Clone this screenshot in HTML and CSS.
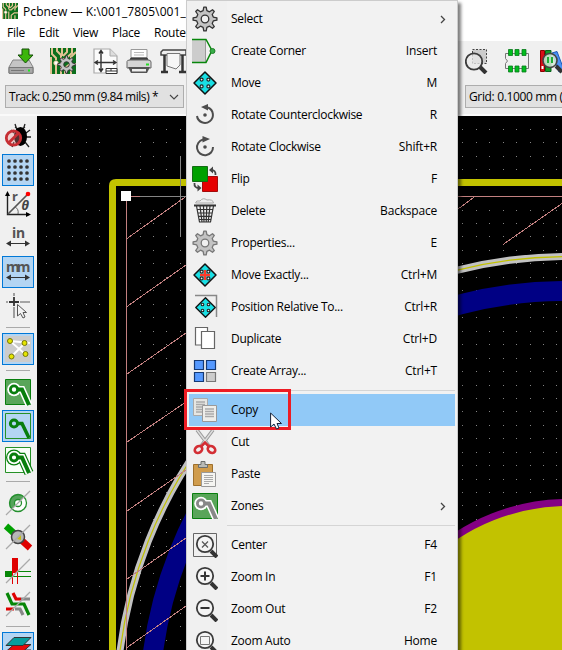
FILE: index.html
```html
<!DOCTYPE html>
<html lang="en">
<head>
<meta charset="utf-8">
<title>Pcbnew</title>
<link rel="stylesheet" href="styles.css">
</head>
<body>
<svg class="defs" width="0" height="0">
  <defs>
    <symbol id="gear" viewBox="0 0 26 26">
      <path fill="#c3c3c3" stroke-width="1.3" stroke-linejoin="round" fill-rule="evenodd" d="M21.3 11.1 24.9 11.8 24.9 14.2 21.3 14.9 20.2 17.5 22.3 20.5 20.5 22.3 17.5 20.2 14.9 21.3 14.2 24.9 11.8 24.9 11.1 21.3 8.5 20.2 5.5 22.3 3.7 20.5 5.8 17.5 4.7 14.9 1.1 14.2 1.1 11.8 4.7 11.1 5.8 8.5 3.7 5.5 5.5 3.7 8.5 5.8 11.1 4.7 11.8 1.1 14.2 1.1 14.9 4.7 17.5 5.8 20.5 3.7 22.3 5.5 20.2 8.5ZM16.8 13a3.8 3.8 0 1 0-7.6 0a3.8 3.8 0 1 0 7.6 0Z"/>
    </symbol>
    <symbol id="move" viewBox="0 0 26 26">
      <path fill="#1adfe4" stroke="#111" stroke-width="1.5" stroke-linejoin="round" d="M13 2 24 13 13 24 2 13Z"/>
      <g fill="#e8f4f4" stroke="#222" stroke-width="1.2"><circle cx="9.6" cy="9.6" r="1.5"/><circle cx="16.4" cy="9.6" r="1.5"/><circle cx="9.6" cy="16.4" r="1.5"/><circle cx="16.4" cy="16.4" r="1.5"/></g>
    </symbol>
    <symbol id="pcb" viewBox="0 0 26 26">
      <path fill="#0b6f1c" d="M0 0H26V26H0Z"/>
      <g fill="none" stroke="#e2c294" stroke-width="2"><path d="M2 0V6L6 10V12M7 0V3L11 7V10M12 0V8M17 0V4L13 8M22 0V5L15 11H11M26 4 21 9V12M1 9V26M6 17V26M11 14V26M26 16H20L15 20V26M21 20V26"/></g>
      <circle cx="6" cy="15" r="2.2" fill="#fff" stroke="#e2c294"/>
    </symbol>
    <symbol id="lens" viewBox="0 0 26 26">
      <path stroke="#333" stroke-width="4" d="m19 19 6 6"/>
      <circle cx="13" cy="12" r="8.2" fill="#f4f4f4" stroke="#3b3b3b" stroke-width="1.8"/>
    </symbol>
  </defs>
</svg>

<div class="window">
  <header class="titlebar">
    <svg class="app-icon" width="16" height="16" viewBox="0 0 26 26"><use href="#pcb"/></svg>
    <span class="title">Pcbnew — K:\001_7805\001_</span>
  </header>
  <nav class="menubar"><span>File</span><span>Edit</span><span>View</span><span>Place</span><span>Route</span></nav>

  <div class="toolbar">
    <svg class="t-save" width="26" height="26" viewBox="0 0 26 26"><path fill="#c5c5c5" stroke="#858585" d="M5 12H21L25 19V25H1V19Z"/><path fill="#a9a9a9" stroke="#777" d="M1 19.5H25V25.3H1Z"/><path stroke="#777" d="M3 22.5H16"/><path stroke="#1de81d" stroke-width="2" d="M20 22.5H22"/><path fill="#3cb60b" stroke="#154d08" d="M14 1H21V7H25L17.5 15 10 7H14Z"/></svg>
    <i class="vsep"></i>
    <svg class="t-setup" width="26" height="26" viewBox="0 0 26 26"><use href="#pcb"/><use href="#gear" x="7" y="7" width="19" height="19" stroke="#333"/></svg>
    <i class="vsep"></i>
    <svg class="t-page" width="26" height="26" viewBox="0 0 26 26"><path fill="#fbfbfb" stroke="#aaa" stroke-width="1.2" d="M1 1H17L24 8V25H1Z"/><path fill="#ddd" stroke="#aaa" d="M17 1V8H24"/><path fill="none" stroke="#333" stroke-width="1.4" d="M8 3V23M3 14.500H22M6 5.500 8 2.500 10 5.500M6 20.500 8 23.500 10 20.500M5 12.500 2 14.500 5 16.500M20 12.500 23 14.500 20 16.500"/><path fill="#fff" stroke="#333" d="M13 20.500H24V25.500H13ZM13 23H24M18 20.500V23"/></svg>
    <svg class="t-print" width="26" height="26" viewBox="0 0 26 26"><path fill="#fff" stroke="#999" d="M5 1.500H21V10H5Z"/><path stroke="#bbb" d="M8 4.500H18M8 7H18"/><path fill="#4a4a4a" stroke="#333" d="M5 10 3 14H23L21 10Z"/><path fill="#d6d6d6" stroke="#666" d="M1 13.500Q1 12 4 12H22Q25 12 25 14V20H1Z"/><path fill="#555" d="M2 19H24L21 25H5Z"/><path fill="#eee" d="M6 21H20V23.500H6Z"/><path stroke="#29dc29" stroke-width="2" d="M20 16.500H23"/></svg>
    <svg class="t-plot" width="26" height="26" viewBox="0 0 26 26"><path fill="#eee" stroke="#444" stroke-width="1.5" d="M3 2H26V7H1V4Z"/><path stroke="#333" stroke-width="2.500" d="M4.500 7V24M1 24H8M22.500 7V24M19 24H26"/><path fill="#f6f6f6" stroke="#777" d="M7 5.500H20V17L16 21 7 18Z"/></svg>
    <svg class="t-zoomsel" width="26" height="26" viewBox="0 0 26 26"><path fill="#ccc" stroke="#444" stroke-dasharray="2 1.500" d="M7.500 1.500H21.500V15.500H7.500Z"/><path stroke="#333" stroke-width="4" d="m15 19 6 6"/><circle cx="9" cy="13.500" r="8.200" fill="#e9e9e9" fill-opacity=".75" stroke="#3b3b3b" stroke-width="1.800"/></svg>
    <i class="vsep"></i>
    <svg class="t-foot" width="26" height="26" viewBox="0 0 26 26"><path fill="#f0f0f0" stroke="#777" d="M1.500 5.500H24.500V20.500H1.500V15.500L3.500 13 1.500 10.500Z"/><path fill="#00bd1d" stroke="#08791a" stroke-width=".8" d="M4.500 1.500H8.500V7.500H4.500ZM11 1.500H15V7.500H11ZM18 1.500H22V7.500H18ZM4.500 18H8.500V24H4.500ZM11 18H15V24H11ZM18 18H22V24H18Z"/></svg>
    <svg class="t-lib" width="26" height="26" viewBox="0 0 26 26"><path fill="#d80d18" stroke="#8b0000" d="M1.500 2.500H5.500V23.500H1.500Z"/><path fill="#129a27" stroke="#07611a" d="M6.500 2.500H12V23.500H6.500Z"/><path fill="#4b92f5" stroke="#1d58b6" d="M13 5 18 3.500 25 22 20 24Z"/><path fill="#fff" d="M2.500 18H4.500V21H2.500Z"/><path stroke="#333" stroke-width="4" d="m17 18 6 6"/><circle cx="11" cy="12.500" r="7" fill="#d6ead8" fill-opacity=".85" stroke="#444" stroke-width="1.600"/><path stroke="#20ad36" stroke-width="2" d="M9 9V15M13 9V15"/></svg>
  </div>

  <div class="selectbar">
    <div class="select track"><span>Track: 0.250 mm (9.84 mils) *</span><svg width="12" height="8" viewBox="0 0 12 8"><path fill="none" stroke="#444" stroke-width="1.100" d="M2 2 6 6 10 2"/></svg></div>
    <div class="select grid-size"><span>Grid: 0.1000 mm (</span></div>
  </div>

  <main class="workspace">
    <aside class="sidebar">
      <div class="tool"><svg width="26" height="26" viewBox="0 0 26 26"><path fill="none" stroke="#222" stroke-width="1.300" d="M12 7 10 1M18 7 20 1M10 4 13 6M20 4 17 6M21 10 25 7M21 14H26M20 19 24 24M9 19 7 24M9 10 6 7"/><ellipse cx="15.500" cy="13.500" rx="6.500" ry="9.500"/><circle cx="8.500" cy="15" r="7.200" fill="#f28d8d" fill-opacity=".35" stroke="#c62f34" stroke-width="2.800"/><path stroke="#c62f34" stroke-width="2.800" d="m3.500 20 10-10"/></svg></div>
      <div class="tool on"><svg width="26" height="26" viewBox="0 0 26 26"><path stroke="#333" stroke-width="3.700" stroke-linecap="round" stroke-dasharray="0 6" d="M4 4H22.100M4 10H22.100M4 16H22.100M4 22H22.100"/></svg></div>
      <div class="tool"><svg width="26" height="26" viewBox="0 0 26 26"><path fill="none" stroke="#222" stroke-width="1.400" d="M2.500 3V23.500H24"/><path d="M0 5 2.500 0 5 5ZM21 21 26 23.500 21 26Z"/><path stroke="#555" stroke-width="1.700" d="M3 23 22 4"/><path fill="none" stroke="#666" d="M10 16Q14 18 13 23"/><circle cx="23" cy="3" r="2.300" fill="red"/><text class="polar-r" x="7" y="10">r</text><text class="polar-t" x="16.500" y="19">θ</text></svg></div>
      <div class="tool"><svg width="26" height="26" viewBox="0 0 26 26"><text class="unit" x="7" y="13">in</text><path stroke="#333" d="M3 18.500H23"/><path fill="#333" d="M6 15.500 1 18.500 6 21.500ZM20 15.500 25 18.500 20 21.500Z"/></svg></div>
      <div class="tool on"><svg width="26" height="26" viewBox="0 0 26 26"><text class="unit" x="1" y="13" textLength="24">mm</text><path stroke="#333" d="M3 18.500H23"/><path fill="#333" d="M6 15.500 1 18.500 6 21.500ZM20 15.500 25 18.500 20 21.500Z"/></svg></div>
      <div class="tool"><svg width="26" height="26" viewBox="0 0 26 26"><path stroke="#8b8b8b" stroke-width="1.600" d="M9 0V3M9 14V25M1 9H3M15 9H25"/><path stroke="#333" stroke-width="1.800" d="M9 4V13M4 9H14"/><path fill="#f3f3f3" stroke="#555" d="M12.500 11.500V23L15.500 20.500 18 25 20 24 18 19.500H21.500Z"/></svg></div>
      <i class="hsep"></i>
      <div class="tool on"><svg width="26" height="26" viewBox="0 0 26 26"><path fill="#ccc" d="M0 0H26V26H0Z"/><path stroke="#fff" stroke-width="1.800" d="M5 5 25 7M5 5 20 18M7 20 20 7"/><g fill="#e5e500" stroke="#77770a"><circle cx="5" cy="5" r="2.500"/><circle cx="19.500" cy="7" r="2.500"/><circle cx="6.500" cy="20.500" r="2.500"/><circle cx="20.500" cy="18" r="2.500"/></g></svg></div>
      <i class="hsep"></i>
      <div class="tool"><svg width="26" height="26" viewBox="0 0 26 26"><path fill="#59a559" stroke="#087e0d" d="M.5.500H25.500V25.500H.5Z"/><path fill="none" stroke="#fff" stroke-width="7" d="M9 10.500H17L24 26"/><circle cx="9" cy="10.500" r="6.800" fill="#fff"/><path fill="none" stroke="#087e0d" stroke-width="4" d="M9 10.500H17L24 26"/><circle cx="9" cy="10.500" r="3.600" fill="#fff" stroke="#087e0d" stroke-width="2.800"/></svg></div>
      <div class="tool on"><svg width="26" height="26" viewBox="0 0 26 26"><path fill="none" stroke="#269126" d="M.5.500H25.500V25.500H.5Z"/><path fill="none" stroke="#087e0d" stroke-width="3.500" d="M9 10.500H17L24 25"/><circle cx="9" cy="10.500" r="3.600" fill="#b3d7f5" stroke="#087e0d" stroke-width="3"/></svg></div>
      <div class="tool"><svg width="26" height="26" viewBox="0 0 26 26"><path fill="#f8fff8" stroke="#269126" d="M.5.500H25.500V25.500H.5Z"/><path fill="none" stroke="#087e0d" stroke-width="9.500" d="M9 10.500H17L24 26"/><circle cx="9" cy="10.500" r="8" fill="#087e0d"/><path fill="none" stroke="#fff" stroke-width="7.200" d="M9 10.500H17L24 26"/><circle cx="9" cy="10.500" r="6.800" fill="#fff"/><path fill="none" stroke="#087e0d" stroke-width="4" d="M9 10.500H17L24 26"/><circle cx="9" cy="10.500" r="3.500" fill="#fff" stroke="#087e0d" stroke-width="2.800"/></svg></div>
      <i class="hsep"></i>
      <div class="tool"><svg width="26" height="26" viewBox="0 0 26 26"><circle cx="13" cy="13" r="8.500" fill="#fff" stroke="#238f2d" stroke-width="1.300"/><path fill="#55a35b" stroke="#238f2d" d="M7 19A8.500 8.500 0 0 1 19 7Z"/><circle cx="13" cy="13" r="3.500" fill="#fff" stroke="#238f2d" stroke-width="1.300"/><path stroke="#aaa" stroke-width="1.200" d="M1 25 25 1"/></svg></div>
      <div class="tool"><svg width="26" height="26" viewBox="0 0 26 26"><path stroke="#00a000" stroke-width="6.500" d="M1 2 12 12"/><path stroke="#df0000" stroke-width="6.500" d="M13 13 25 24"/><circle cx="13" cy="13" r="6.500" fill="#b7b7b7" stroke="#444" stroke-width="1.500"/><path fill="#c6bd16" d="M12 15 16 11V16Z"/><path stroke="#aaa" stroke-width="1.200" d="M1 25 25 1"/></svg></div>
      <div class="tool"><svg width="26" height="26" viewBox="0 0 26 26"><path fill="#078607" d="M0 13H7V19H0Z"/><path stroke="#078607" d="M7 13.500H26M7 18.500H26"/><path fill="#df0000" d="M7 0H13V15H7Z"/><path stroke="#df0000" d="M7.500 15V26M12.500 15V26"/><path stroke="#aaa" stroke-width="1.200" d="M1 25 25 1"/></svg></div>
      <div class="tool"><svg width="26" height="26" viewBox="0 0 26 26"><g fill="none" stroke-width="3.200"><path stroke="#df0000" d="M8 1 11 7H16M1 17H9"/><path stroke="#888" d="M16 7H25M10 17H15L18 23"/><path stroke="#078607" d="M2 1 7 12H19L24 23"/></g><path stroke="#aaa" stroke-width="1.200" d="M1 24 25 0"/></svg></div>
      <i class="hsep"></i>
      <div class="tool on"><svg width="26" height="26" viewBox="0 0 26 26"><path fill="#0b8a22" stroke="#333" d="M1 22 9 15H26L18 22Z"/><path fill="#e50909" stroke="#333" d="M1 16.500 9 9.500H26L18 16.500Z"/><path fill="#079d9d" stroke="#333" d="M1 10.500 9 2.500H26L18 10.500Z"/></svg></div>
    </aside>
    <svg class="board" width="525" height="534" viewBox="37 116 525 534">
      <path id="dots" fill="#858585"/>
      <path fill="none" stroke="#c2c200" stroke-width="7" d="M112.500 650V186Q112.500 182.500 116 182.500H562"/>
      <circle cx="567.500" cy="707.500" r="451" fill="none" stroke="#c2c2c2" stroke-width="7"/>
      <circle cx="567.500" cy="707.500" r="451" fill="none" stroke="#c2c200" stroke-width="1.200"/>
      <circle cx="565" cy="706.500" r="415.500" fill="none" stroke="#000084" stroke-width="20"/>
      <circle cx="568" cy="706.500" r="204" fill="#c2c200" stroke="#840084" stroke-width="7"/>
      <path class="zone" d="M126.500 196.500H562M126.500 196V650"/>
      <path class="zone hatch" d="M127 238.500 186 196.500M127 306.500 186 265M127 374 186 333M127 442 186 402M127 511 186 470M127 579 186 538M127 647.500 186 606M458 209 475 196.500M503 244.500 562 203.500"/>
      <path class="crosshair" d="M140 196.500H186M180.500 156V237"/>
      <path fill="#fff" d="M121 191H131V201H121Z"/>
    </svg>
  </main>
</div>

<div class="context-menu">
  <div class="item"><svg width="26" height="26"><use href="#gear" stroke="#333"/></svg><span>Select</span><svg class="arrow" width="6" height="9" viewBox="0 0 6 9"><path fill="none" stroke="#444" stroke-width="1.300" d="M1 1 4.500 4.500 1 8"/></svg></div>
  <div class="item"><svg width="26" height="26" viewBox="0 0 26 26"><path fill="#ccc" d="M0 1H13V24H0Z"/><path stroke="#999" d="M13.500 2V24"/><path fill="none" stroke="#07860b" stroke-width="1.500" d="M0 1.500H14L20 12.500 14 24.500H0"/><circle cx="20.500" cy="13" r="2.500" fill="#37ae48" stroke="#227f2a"/></svg><span>Create Corner</span><kbd>Insert</kbd></div>
  <div class="item"><svg width="26" height="26"><use href="#move"/></svg><span>Move</span><kbd>M</kbd></div>
  <div class="item"><svg width="26" height="26" viewBox="0 0 26 26"><path fill="none" stroke="#4d4d4d" stroke-width="2" d="M5 14A8 8 0 1 0 16 5.500"/><path fill="#4d4d4d" d="M9 5 16 2V8.500Z"/><circle cx="13" cy="13" r="1.800" fill="#4d4d4d"/></svg><span>Rotate Counterclockwise</span><kbd>R</kbd></div>
  <div class="item"><svg width="26" height="26" viewBox="0 0 26 26"><path fill="none" stroke="#4d4d4d" stroke-width="2" d="M21 13A8 8 0 1 1 11 5.500"/><path fill="#4d4d4d" d="M18 5 10.500 2V8.500Z"/><circle cx="13" cy="13" r="1.800" fill="#4d4d4d"/></svg><span>Rotate Clockwise</span><kbd>Shift+R</kbd></div>
  <div class="item"><svg width="26" height="26" viewBox="0 0 26 26"><path fill="#e50000" stroke="#a20c0c" d="M10.500 10.500H25.500V25.500H10.500Z"/><path fill="#00a000" stroke="#146b14" d="M.5.500H15.500V15.500H.5Z"/><path fill="none" stroke="#444" stroke-width="1.800" d="M23.500 9Q24 4 19 4M2.500 17Q2 22 7 22"/><path fill="#444" d="M17 4 21 .500V7.500ZM9.500 22 5.500 18.500V25.500Z"/></svg><span>Flip</span><kbd>F</kbd></div>
  <div class="item"><svg width="26" height="26" viewBox="0 0 26 26"><path fill="#eee" stroke="#aaa" d="M3.500 5Q4 2 8 3Q11-1 15 2Q21 1 21.500 5Z"/><path fill="#333" d="M2 6.500H24V8.500H2Z"/><path fill="none" stroke="#333" stroke-width="1.200" d="M4.500 8 7.500 24H18.500L21.500 8M8 8 10 24M11.500 8 12 24M14.800 8 14.200 24M18 8 16.200 24M5 11.500H21M5.500 15H20.500M6 18.300H20M6.500 21.500H19.500"/></svg><span>Delete</span><kbd>Backspace</kbd></div>
  <div class="item"><svg width="26" height="26"><use href="#gear" stroke="#777"/></svg><span>Properties...</span><kbd>E</kbd></div>
  <div class="item"><svg width="26" height="26" viewBox="0 0 26 26"><use href="#move"/><path stroke="#ff3a2a" stroke-width="2.400" d="M13 8V18M8 13H18"/></svg><span>Move Exactly...</span><kbd>Ctrl+M</kbd></div>
  <div class="item"><svg width="26" height="26" viewBox="0 0 26 26"><path fill="none" stroke="#888" stroke-width="1.500" d="M3 1.500H24.500V23"/><use href="#move" x="2" y="2" width="23" height="23"/></svg><span>Position Relative To...</span><kbd>Ctrl+R</kbd></div>
  <div class="item"><svg width="26" height="26" viewBox="0 0 26 26"><g fill="#fff" stroke="#666" stroke-width="1.200"><path d="M3.500 1.500H15.500V19H3.500Z"/><path d="M9.500 5.500H22.500V22.500H9.500Z"/></g></svg><span>Duplicate</span><kbd>Ctrl+D</kbd></div>
  <div class="item"><svg width="26" height="26" viewBox="0 0 26 26"><g fill="#5599ff" stroke="#153a75" stroke-width="1.200"><path d="M2.500 2.500H11.500V11.500H2.500ZM14.500 2.500H23.500V11.500H14.500ZM2.500 14.500H11.500V23.500H2.500Z"/><path fill="#ccc" stroke="#777" d="M14.500 14.500H23.500V23.500H14.500Z"/></g></svg><span>Create Array...</span><kbd>Ctrl+T</kbd></div>
  <hr>
  <div class="item active"><svg width="26" height="26" viewBox="0 0 26 26"><path fill="#e6e6e2" stroke="#aaa" d="M1.500 1.500H15.500V18.500H1.500Z"/><path stroke="#aaa" stroke-width="1.300" d="M4 5H13M4 7.500H13M4 10H13M4 12.500H13M4 15H13"/><path fill="#eeeeea" stroke="#999" d="M10.500 8.500H24.500V24.500H10.500Z"/><path stroke="#aaa" stroke-width="1.300" d="M13 12H22M13 14.500H22M13 17H22M13 19.500H22"/></svg><span>Copy</span></div>
  <div class="item"><svg width="26" height="26" viewBox="0 0 26 26"><path fill="none" stroke="#999" stroke-width="3.500" d="M5 1 17 17M21 1 9 17"/><path stroke="#ddd" stroke-width="1.500" d="M5 1 17 17M21 1 9 17"/><g fill="none" stroke="#d32e34" stroke-width="2.600"><ellipse cx="6.500" cy="20.500" rx="4" ry="3.200" transform="rotate(-35 6.500 20.500)"/><ellipse cx="19.500" cy="20.500" rx="4" ry="3.200" transform="rotate(35 19.500 20.500)"/><path d="M9.500 17 13 13.500 16.500 17"/></g></svg><span>Cut</span></div>
  <div class="item"><svg width="26" height="26" viewBox="0 0 26 26"><path fill="#d09c4c" stroke="#9e702c" d="M1.500 3.500H20.500V24.500H1.500Z"/><path fill="#b9bbb7" stroke="#6d6f6c" d="M6.500 6.500V3.500H9V.500H13V3.500H15.500V6.500Z"/><path fill="#f5f5f2" stroke="#999" d="M9.500 11.500H23.500V25.500H9.500Z"/><path stroke="#aaa" d="M12 14.500H21M12 16.500H21M12 18.500H21M12 20.500H21M12 22.500H17"/></svg><span>Paste</span></div>
  <div class="item"><svg width="26" height="26" viewBox="0 0 26 26"><path fill="#59a559" stroke="#087e0d" d="M.5.500H25.500V25.500H.5Z"/><path fill="none" stroke="#fff" stroke-width="7" d="M9 10.500H17L24 26"/><circle cx="9" cy="10.500" r="6.800" fill="#fff"/><path fill="none" stroke="#888" stroke-width="4" d="M9 10.500H17L24 26"/><circle cx="9" cy="10.500" r="3.600" fill="#fff" stroke="#888" stroke-width="2.800"/></svg><span>Zones</span><svg class="arrow" width="6" height="9" viewBox="0 0 6 9"><path fill="none" stroke="#444" stroke-width="1.300" d="M1 1 4.500 4.500 1 8"/></svg></div>
  <hr>
  <div class="item"><svg width="26" height="26" viewBox="0 0 26 26"><path fill="none" stroke="#666" d="M1.500 1.500H24.500V24.500H1.500Z"/><use href="#lens"/><path stroke="#555" stroke-width="1.200" d="m10 9.500 6 6M16 9.500 10 15.500"/></svg><span>Center</span><kbd>F4</kbd></div>
  <div class="item"><svg width="26" height="26" viewBox="0 0 26 26"><use href="#lens"/><path stroke="#333" stroke-width="2" d="M13 7.500V16.500M8.500 12H17.500"/></svg><span>Zoom In</span><kbd>F1</kbd></div>
  <div class="item"><svg width="26" height="26" viewBox="0 0 26 26"><use href="#lens"/><path stroke="#333" stroke-width="2" d="M8.500 12H17.500"/></svg><span>Zoom Out</span><kbd>F2</kbd></div>
  <div class="item"><svg width="26" height="26" viewBox="0 0 26 26"><use href="#lens"/><path fill="none" stroke="#777" d="M8.500 8.500H17.500V16.500H8.500Z"/></svg><span>Zoom Auto</span><kbd>Home</kbd></div>
</div>
<div class="highlight"></div>
<svg class="pointer" width="14" height="18" viewBox="0 0 14 18"><path fill="#fff" stroke="#152238" d="M.6 1V15L4 12 6.500 17 9 16 7 11.500H11.500Z"/></svg>
<script src="dots.js"></script>
</body>
</html>
```
FILE: styles.css
```css
* { box-sizing: border-box; }
body {
  margin: 0;
  width: 562px;
  height: 650px;
  overflow: hidden;
  position: relative;
  background: #f0f0f0;
  color: #000;
  font: 12px/16px "Open Sans", "Noto Sans", sans-serif;
  letter-spacing: -0.29px;
}
svg { display: block; flex: none; }
.defs { position: absolute; }
.window { width: 562px; height: 650px; overflow: hidden; white-space: nowrap; }

.titlebar { display: flex; gap: 5px; height: 25px; padding: 3px 0 0 2px; background: #fff; }
.title { line-height: 18px; letter-spacing: 0.1px; }
.menubar { display: flex; height: 16px; padding-left: 7px; background: #fff; }
.menubar span { line-height: 16px; margin-right: 14px; }

.toolbar { display: flex; align-items: center; height: 41px; padding: 0 0 2px 8px; }
.vsep { width: 1px; height: 24px; background: #aaa; }
.t-save { margin-right: 8px; }
.t-setup { margin: 0 8px; }
.t-page { margin: 0 7px 0 9px; }
.t-print { margin-right: 8px; }
.t-plot { margin-right: 279px; }
.t-zoomsel { margin-right: 4px; }
.t-foot { margin: 0 9px; }

.selectbar { display: flex; height: 34px; padding: 3px 0 0 5px; border-bottom: 2px solid #fafafa; }
.select {
  display: flex;
  flex: none;
  align-items: center;
  justify-content: space-between;
  height: 23px;
  padding: 0 3px;
  border: 1px solid #adadad;
  background: #e1e1e1;
}
.track { width: 179px; margin-right: 281px; letter-spacing: -0.45px; }
.grid-size { width: 120px; letter-spacing: -0.35px; }

.workspace { display: flex; height: 534px; }
.sidebar { width: 37px; flex: none; display: flex; flex-direction: column; padding: 3px 0 0 2px; }
.tool { width: 32px; height: 32px; margin: 1px 0; padding: 3px; flex: none; }
.tool.on { padding: 2px; border: 1px solid #0078d7; background: #b3d5f3; }
.hsep { width: 24px; height: 1px; margin: 4px; flex: none; background: #aaa; }
.unit { font: bold 14px "Noto Sans", sans-serif; fill: #555; }
.polar-r { font: bold 13px "Noto Sans", sans-serif; fill: #555; }
.polar-t { font: italic bold 13px "Noto Sans", sans-serif; fill: #444; }
.tool svg { overflow: visible; }

.board { background: #000; }
.zone { fill: none; stroke: #c28080; }
.hatch { shape-rendering: crispEdges; }
.crosshair { fill: none; stroke: #848484; }

.context-menu {
  position: absolute;
  left: 186px;
  top: 0;
  width: 272px;
  height: 662px;
  padding: 2px;
  border: 1px solid #ccc;
  background: linear-gradient(90deg, #f0f0f0 40px, #f2f2f2 40px);
  box-shadow: 3px 3px 3px rgba(0, 0, 0, .5);
}
.item { display: flex; align-items: center; height: 32px; padding: 0 18px 0 3px; }
.item span { margin-left: 13px; flex: 1; }
.item kbd { font: inherit; letter-spacing: -0.2px; }
.item .arrow { margin-right: -9px; }
.active { background: #91c9f7; }
.context-menu hr { height: 1px; margin: 3px 0 3px 38px; border: 0; background: #d5d5d5; }

.highlight { position: absolute; left: 184px; top: 389px; width: 107px; height: 41px; border: 3px solid #ed1c24; }
.pointer { position: absolute; left: 270px; top: 412px; }
```
FILE: dots.js
```js
const columns = [46, 59, 72, 86, 99, 140, 153, 166, 180, 462, 476, 489, 503, 516, 530, 543, 556];
const rows = [129, 142, 156, 169, 183, 210, 223, 236, 250, 263, 277, 290, 304, 317, 331, 344, 358, 371, 385, 398,
  411, 425, 438, 452, 465, 479, 492, 505, 519, 532, 546, 559, 573, 586, 600, 613, 626, 640];
document.getElementById('dots').setAttribute('d',
  columns.map(x => rows.map(y => `M${x} ${y}h1v1h-1z`).join('')).join(''));
```
